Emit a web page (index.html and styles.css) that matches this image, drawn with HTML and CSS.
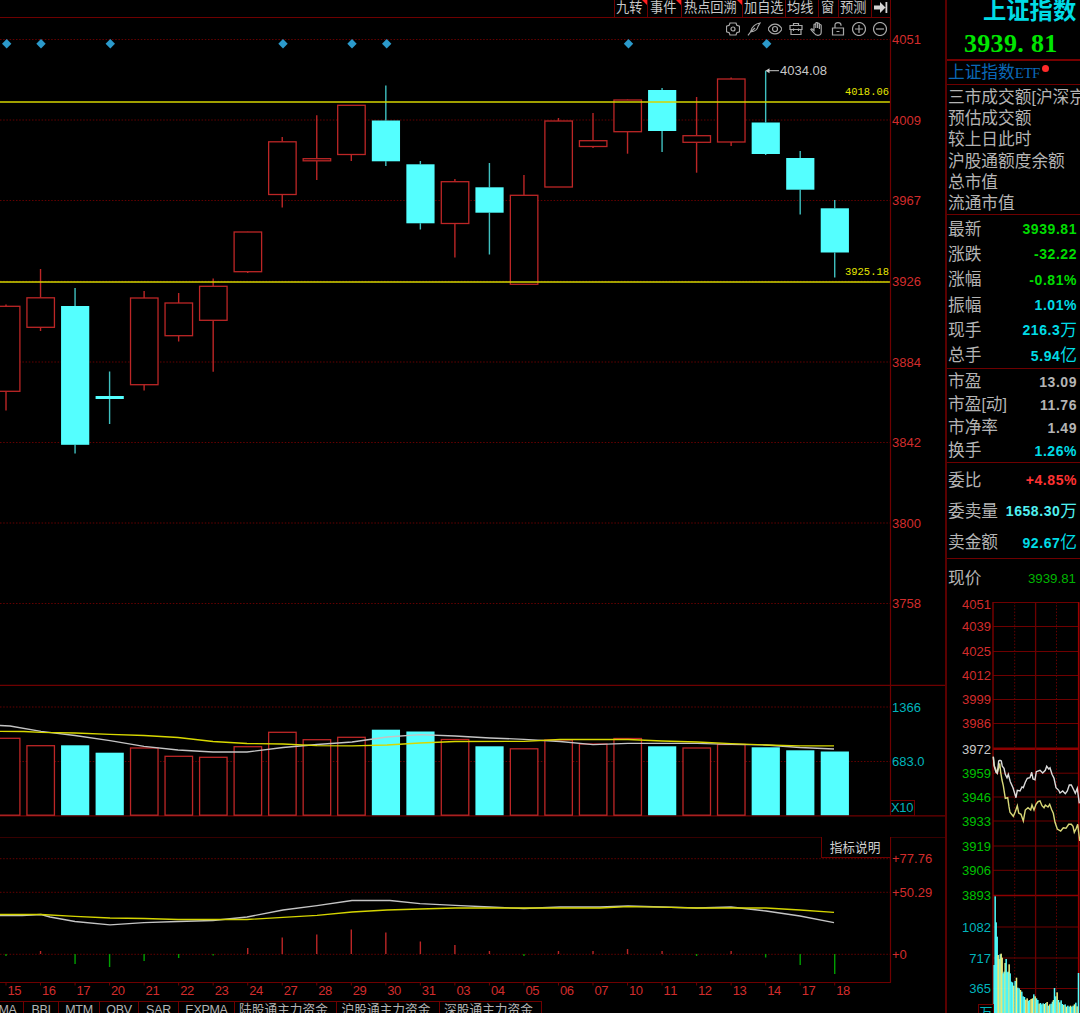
FILE: index.html
```html
<!DOCTYPE html>
<html lang="zh-CN">
<head>
    <meta charset="UTF-8">
    <meta name="viewport" content="width=device-width, initial-scale=1.0">
    <title>上证指数</title>
    <link rel="stylesheet" href="styles.css">
</head>
<body>
    <div class="terminal">
        <main class="charts">
            <nav class="toolbar">
                <span class="tool hot w33">九转</span>
                <span class="tool hot w34">事件</span>
                <span class="tool hot w61">热点回溯</span>
                <span class="tool w43">加自选</span>
                <span class="tool w33">均线</span>
                <span class="tool w20">窗</span>
                <span class="tool w33">预测</span>
                <span class="tool w19">
                    <svg width="14" height="13" viewBox="0 0 14 13"><path d="M0 4.500h6V1l5.500 5.500L6 12V8.500H0zM11.500 1h1.800v11h-1.800z" fill="#d4d4d4"/></svg>
                </span>
            </nav>

            <section class="panel">
                <svg id="price" width="945" height="668" viewBox="0 18 945 668"></svg>
                <div class="icons">
                    <svg viewBox="0 0 14 14"><path d="M4 1h6l.8 2.300 2.700 1V9.700l-2.700 1L10 13H4l-.8-2.300-2.700-1V4.300l2.700-1z"/><circle cx="7" cy="7" r="2"/></svg>
                    <svg viewBox="0 0 14 14"><path d="M13 1C9 1.500 4.500 4.500 3.500 10c4-.5 7-3 7.500-5.500zM3.500 10L1 13.300M3.500 10L8 6"/></svg>
                    <svg viewBox="0 0 14 14"><path d="M0 7c3.500-6.500 10.500-6.500 14 0-3.500 6.500-10.500 6.500-14 0z"/><circle cx="7" cy="7" r="2.500"/></svg>
                    <svg viewBox="0 0 14 14"><path d="M1 3.500h12v4H1zM2 7.500v5h10v-5M4.500 3.500v-2h5v2M4.500 6.500v2.500M9.500 6.500v2.500"/></svg>
                    <svg viewBox="0 0 14 14"><path d="M4 8.500V3q0-1 .9-1t.9 1v3V1.500q0-1 .9-1t.9 1V6 2q0-1 .9-1t.9 1v5V3.500q0-1 .9-1t.9 1V9.500Q11.500 13.300 8 13.300 5.500 13.300 4 11L.8 7.500q.8-1.300 2 0z"/></svg>
                    <svg viewBox="0 0 14 14"><path d="M1.500 6h11v7h-11zM4 6V3q0-2.300 3-2.300T10 3v.8M5.500 9.500h3"/></svg>
                    <svg viewBox="0 0 14 14"><circle cx="7" cy="7" r="6.500"/><path d="M3 7h8M7 3v8"/></svg>
                    <svg viewBox="0 0 14 14"><circle cx="7" cy="7" r="6.500"/><path d="M3 7h8"/></svg>
                </div>
            </section>

            <section class="panel volume">
                <svg id="volume" width="945" height="131" viewBox="0 686 945 131"></svg>
            </section>

            <section class="panel macd">
                <svg id="macd" width="945" height="164" viewBox="0 837 945 164"></svg>
                <button class="explain">指标说明</button>
            </section>

            <nav class="indicators">
                <span class="ind i24">MA</span>
                <span class="ind i35">BBI</span>
                <span class="ind i41">MTM</span>
                <span class="ind i39">OBV</span>
                <span class="ind i40">SAR</span>
                <span class="ind i56">EXPMA</span>
                <span class="ind cjk i102">陆股通主力资金</span>
                <span class="ind cjk i103">沪股通主力资金</span>
                <span class="ind cjk i102">深股通主力资金</span>
            </nav>
        </main>

        <aside class="quote">
            <header class="head">
                <div class="name">上证指数</div>
                <div class="last">3939<span class="dot">.</span>81</div>
            </header>
            <div class="etf">上证指数<span class="etf-en">ETF</span><i class="badge"></i></div>

            <div class="group market">
                <div class="row"><span>三市成交额<span class="br">[</span>沪深京</span></div>
                <div class="row"><span>预估成交额</span></div>
                <div class="row"><span>较上日此时</span></div>
                <div class="row"><span>沪股通额度余额</span></div>
                <div class="row"><span>总市值</span></div>
                <div class="row"><span>流通市值</span></div>
            </div>

            <div class="group basic">
                <div class="row"><span>最新</span><b class="green">3939.81</b></div>
                <div class="row"><span>涨跌</span><b class="green">-32.22</b></div>
                <div class="row"><span>涨幅</span><b class="green">-0.81%</b></div>
                <div class="row"><span>振幅</span><b class="cyan">1.01%</b></div>
                <div class="row"><span>现手</span><b class="cyan">216.3<em>万</em></b></div>
                <div class="row"><span>总手</span><b class="cyan">5.94<em>亿</em></b></div>
            </div>

            <div class="group ratio">
                <div class="row"><span>市盈</span><b>13.09</b></div>
                <div class="row"><span>市盈<span class="br">[</span>动<span class="br">]</span></span><b>11.76</b></div>
                <div class="row"><span>市净率</span><b>1.49</b></div>
                <div class="row"><span>换手</span><b class="cyan">1.26%</b></div>
            </div>

            <div class="group orders">
                <div class="row"><span>委比</span><b class="red">+4.85%</b></div>
                <div class="row"><span>委卖量</span><b class="aqua">1658.30<em>万</em></b></div>
                <div class="row"><span>卖金额</span><b class="cyan">92.67<em>亿</em></b></div>
            </div>

            <div class="row now"><span>现价</span><span class="now-value">3939.81</span></div>
            <svg id="intraday" width="133" height="414" viewBox="947 599 133 414"></svg>
        </aside>
    </div>
    <script src="charts.js"></script>
</body>
</html>
```

FILE: styles.css
```css
body {
    margin: 0;
    background-color: #000;
    color: #b4b4b4;
    font-family: "Liberation Sans", "Noto Sans CJK SC", sans-serif;
    overflow: hidden;
}
svg {
    display: block;
}
.terminal {
    display: flex;
    width: 1080px;
    height: 1013px;
    overflow: hidden;
}
.charts {
    width: 945px;
    flex: none;
    display: flex;
    flex-direction: column;
}

/* top toolbar */
.toolbar {
    display: flex;
    justify-content: flex-end;
    box-sizing: border-box;
    width: 891px;
    height: 18px;
    border-bottom: 1px solid #6e0000;
    border-right: 1px solid #6e0000;
}
.tool {
    display: flex;
    align-items: center;
    box-sizing: border-box;
    position: relative;
    height: 17px;
    padding: 0 0 2px 1px;
    border-left: 1px solid #6e0000;
    font-size: 13.2px;
    line-height: 14px;
    color: #c8c8c8;
    white-space: nowrap;
}
.hot::after {
    content: "";
    position: absolute;
    top: 0;
    right: 0;
    border-top: 5px solid #ff2020;
    border-left: 5px solid transparent;
}
.w19 { width: 19px; padding-left: 2px; }
.w20 { width: 20px; padding-left: 2px; }
.w33 { width: 33px; }
.w34 { width: 34px; padding-left: 2px; }
.w43 { width: 43px; }
.w61 { width: 61px; padding-left: 2px; }

/* chart panels */
.panel {
    position: relative;
}
.volume {
    margin-bottom: 20px;
}
.icons {
    position: absolute;
    top: 4px;
    left: 726px;
    display: flex;
    gap: 7px;
}
.icons svg {
    width: 14px;
    height: 14px;
    fill: none;
    stroke: #a8a8a8;
    stroke-width: 1.2;
}
.explain {
    position: absolute;
    top: 0;
    left: 821px;
    width: 70px;
    height: 21px;
    padding: 0 2px 0 0;
    background-color: #000;
    border: 1px solid #6e0000;
    border-top: none;
    color: #d0d0d0;
    font-family: inherit;
    font-size: 12.7px;
    line-height: 22px;
}
.indicators {
    display: flex;
    height: 12px;
}
.ind {
    box-sizing: border-box;
    height: 12px;
    border-top: 1px solid #6e0000;
    border-right: 1px solid #6e0000;
    text-align: center;
    font-size: 12.5px;
    line-height: 17px;
    letter-spacing: -0.3px;
    white-space: nowrap;
    flex: none;
}
.cjk {
    padding-right: 4px;
    font-size: 12.7px;
    letter-spacing: 0;
    line-height: 17px;
}
.i24 { width: 24px; text-indent: -8px; }
.i35 { width: 35px; }
.i39 { width: 39px; }
.i40 { width: 40px; }
.i41 { width: 41px; }
.i56 { width: 56px; }
.i102 { width: 102px; }
.i103 { width: 103px; }

/* chart text */
.axis {
    font-size: 13px;
    fill: #d22c2c;
}
.axis-cyan {
    fill: #00b4bc;
}
.axis-green {
    fill: #00c000;
}
.axis-white {
    fill: #c8c8c8;
}
.level {
    font-family: "Liberation Mono", monospace;
    font-size: 11.5px;
    fill: #e6e600;
}

/* quote panel */
.quote {
    flex: none;
    box-sizing: border-box;
    width: 135px;
    border-left: 2px solid #5a0000;
    overflow: hidden;
}
.head {
    height: 59px;
    border-bottom: 2px solid #760000;
}
.name {
    height: 30px;
    margin-left: 36px;
    color: #00dce6;
    font-size: 23.3px;
    font-weight: bold;
    line-height: 23px;
    white-space: nowrap;
}
.last {
    margin-left: 17px;
    color: #00e600;
    font-family: "Liberation Serif", serif;
    font-weight: bold;
    font-size: 26px;
    letter-spacing: 0.3px;
    line-height: 28px;
}
.dot {
    margin-right: 7px;
}
.etf {
    display: flex;
    align-items: center;
    height: 23px;
    padding-left: 1px;
    border-bottom: 1px solid #6e0000;
    color: #0a68b8;
    font-size: 16.7px;
    line-height: 20px;
}
.etf-en {
    font-family: "Liberation Serif", serif;
    font-size: 15px;
    letter-spacing: -0.5px;
}
.badge {
    width: 7px;
    height: 7px;
    margin: 0 0 8px 2px;
    border-radius: 50%;
    background-color: #ff2a2a;
}
.group {
    border-bottom: 1px solid #6e0000;
    box-sizing: border-box;
}
.row {
    display: flex;
    align-items: center;
    justify-content: space-between;
    padding: 0 3px 0 1px;
    font-size: 16.7px;
    line-height: 20px;
    white-space: nowrap;
}
.row b {
    display: flex;
    align-items: center;
    font-size: 14px;
    letter-spacing: 0.55px;
    line-height: 18px;
    padding-bottom: 1px;
}
.row em {
    font-style: normal;
    font-weight: normal;
    font-size: 16.7px;
    letter-spacing: 0;
    padding-top: 1px;
}
.br {
    font-family: "Liberation Sans", sans-serif;
    font-size: 16px;
}
.market {
    height: 130px;
    padding-top: 2px;
}
.market .row {
    height: 21.3px;
}
.basic {
    height: 154px;
    padding-top: 2px;
}
.basic .row {
    height: 25.3px;
}
.ratio {
    height: 94px;
    padding-top: 1.5px;
}
.ratio .row {
    height: 23.1px;
}
.orders {
    height: 96px;
    padding-top: 2px;
}
.orders .row {
    height: 31.3px;
}
.now {
    height: 40px;
    padding-right: 4px;
}
.now-value {
    color: #00b400;
    font-size: 13.3px;
}
.green { color: #00dc00; }
.cyan { color: #00dce6; }
.aqua { color: #50f0f0; }
.red { color: #ff3232; }
```

FILE: charts.js
```js
const LINE = '#6e0000';
const GRID = '#640000';
const RED = '#bc2626';
const CYAN = '#54ffff';
const STEP = 34.53;

const cx = i => 6 + i * STEP;
const line = (x1, y1, x2, y2, color, w = 1, extra = '') =>
    `<line x1="${x1}" y1="${y1}" x2="${x2}" y2="${y2}" stroke="${color}" stroke-width="${w}" ${extra}/>`;
const text = (x, y, s, cls = '', extra = '') =>
    `<text x="${x}" y="${y}" class="axis ${cls}" ${extra}>${s}</text>`;
const poly = (pts, color, w = 1.2) =>
    `<polyline points="${pts}" fill="none" stroke="${color}" stroke-width="${w}"/>`;
const box = (i, top, bottom, up) => up
    ? `<rect x="${cx(i) - 13.6}" y="${top}" width="27.5" height="${bottom - top}" fill="#000" stroke="${RED}" stroke-width="1.3"/>`
    : `<rect x="${cx(i) - 14}" y="${top}" width="28.2" height="${bottom - top}" fill="${CYAN}"/>`;
const dots = 'stroke-dasharray="1.5 1.7"';

// day, high, body top, body bottom, low, up, volume top, macd bar end
const days = [
    ['15', 304.5, 306.3, 391.3, 410.5, 1, 738.3, 956],
    ['16', 269, 297.8, 327.3, 331, 1, 745.7, 951],
    ['17', 288, 306, 444.8, 453.5, 0, 745.3, 964],
    ['20', 371.5, 396, 399, 424, 0, 752.7, 967],
    ['21', 291, 298, 384.7, 390.5, 1, 748, 961],
    ['22', 293, 303, 335.7, 341.5, 1, 756.3, 958],
    ['23', 278.5, 286.3, 320.3, 371.7, 1, 757.3, 955.5],
    ['24', 231.7, 232, 271.7, 273, 1, 746.7, 948],
    ['27', 137, 141.8, 194.5, 207.5, 1, 732.3, 937.5],
    ['28', 115.3, 158.7, 160.8, 180, 1, 739.7, 934.5],
    ['29', 105, 105.3, 154.5, 161, 1, 737.3, 929.5],
    ['30', 85.5, 120.5, 161.3, 166, 0, 729.7, 932.5],
    ['31', 161, 164.3, 223.3, 229.5, 0, 731.5, 941.5],
    ['03', 179, 181.7, 223.5, 257.5, 1, 739.5, 945],
    ['04', 163, 187.3, 212.7, 254.5, 0, 746.3, 951],
    ['05', 175, 195.3, 284.3, 284.3, 1, 748.8, 956],
    ['06', 118, 121, 187, 187, 1, 740, 951],
    ['07', 113, 140.7, 146.5, 148, 1, 744, 951],
    ['10', 99.5, 100, 131.7, 153.7, 1, 738.5, 949],
    ['11', 88, 90, 131, 152, 0, 746.3, 951],
    ['12', 97, 135.7, 142.3, 172.7, 1, 748, 956],
    ['13', 77.5, 79, 142, 146, 1, 744.5, 951],
    ['14', 70.7, 122.5, 154, 155, 0, 747.3, 957.5],
    ['17', 151, 158, 189.7, 214.5, 0, 750.3, 965],
    ['18', 200, 208.3, 252.5, 277.5, 0, 751.5, 974]
];

// price panel
let p = '';
[[39.5, 4051], [120, 4009], [200.5, 3967], [281.3, 3926], [362, 3884], [442.5, 3842], [523, 3800], [603.5, 3758]]
    .forEach(([y, v]) => p += line(0, y, 890, y, GRID, 1, dots) + text(892, y + 4.6, v));
days.forEach(([, high, top, bottom, low, up], i) => {
    p += line(cx(i), high, cx(i), top, up ? RED : '#40c0c0', 1.4);
    p += line(cx(i), bottom, cx(i), low, up ? RED : '#40c0c0', 1.4);
    p += box(i, top, bottom, up);
});
[6.7, 41, 110.3, 283, 352, 386.7, 628.5, 766.7].forEach(x =>
    p += `<path d="M${x} 39l4.700 4.700-4.700 4.700-4.700-4.700z" fill="#2b9acb"/>`);
p += line(0, 102, 890, 102, '#d4d400', 1.4) + line(0, 282, 890, 282, '#d4d400', 1.4);
p += text(845, 95, '4018.06', 'level', 'textLength="44" lengthAdjust="spacingAndGlyphs"');
p += text(845, 275, '3925.18', 'level', 'textLength="44" lengthAdjust="spacingAndGlyphs"');
p += line(768, 70.7, 779, 70.7, '#c8c8c8') + '<path d="M765.500 70.700l4-2.500v5z" fill="#d0d0d0"/>';
p += text(780, 74.6, '4034.08', 'axis-white');
p += line(890.5, 18, 890.5, 686, LINE, 1.2) + line(0, 685.3, 945, 685.3, LINE, 1.2);
document.getElementById('price').innerHTML = p;

// volume panel
let v = line(0, 707, 890, 707, GRID, 1, dots) + line(0, 761.5, 890, 761.5, GRID, 1, dots);
v += line(0, 815.8, 945, 815.8, LINE, 1.2);
days.forEach((d, i) => v += box(i, d[6], 815.2, d[5]));
v += poly('0,725.5 10,726 41,731.3 75,735.5 110,740.7 144,746.3 178,750 213,752 247,752 283,747.5 317,744.5 352,742 387,737 420,734.7 455,736 490,738 524,739.3 560,741.5 593,744.7 628,743.3 662,743.3 697,743.3 731,744.3 766,745 800,747.5 834,749', '#c4c4c4', 1.3);
v += poly('0,731.3 24,731.5 41,732.3 75,733 110,734.3 144,735.5 178,737.5 213,741.5 247,743.5 283,744 317,745.7 352,745.8 387,745 420,743 455,741.5 524,741.3 560,739.5 628,739.5 662,741 697,742 731,743.7 766,745 800,745.8 834,745.8', '#d8d800', 1.3);
v += line(890.5, 686, 890.5, 816, LINE, 1.2);
v += text(892, 711.5, '1366', 'axis-cyan') + text(892, 766, '683.0', 'axis-cyan');
v += `<rect x="890.5" y="800.5" width="24" height="15" fill="none" stroke="${LINE}"/>`;
v += text(891, 812.3, 'X10', 'axis-cyan', 'textLength="22.500"');
document.getElementById('volume').innerHTML = v;

// macd panel
let m = line(0, 837, 945, 837, LINE, 1.2);
m += line(890.5, 837, 890.5, 982.5, LINE, 1.2) + line(0, 982.5, 891, 982.5, LINE, 1.2);
[[858.7, '+77.76'], [892.3, '+50.29'], [954.3, '+0']].forEach(([y, s]) =>
    m += line(0, y, 890, y, GRID, 1, dots) + text(892, y + 4.7, s));
days.forEach((d, i) => {
    m += line(cx(i), 954, cx(i), d[7], d[7] < 954 ? '#bc2626' : '#00a000', 1.4);
    m += line(cx(i), 982.5, cx(i), 985.5, LINE) + text(cx(i) + 1.5, 995.3, d[0], '', 'textLength="14"');
});
m += poly('0,915.5 22,915.5 41,914.5 50,917 75,921.5 110,924.8 144,922.7 178,921.5 213,920.5 247,917 283,910 317,905.7 352,900.5 390,900.5 420,903.7 455,905.3 490,907 524,908.5 560,907 600,907 628,906 662,907 697,908 731,907 766,911 800,916 834,922.7', '#c4c4c4', 1.3);
m += poly('0,914.5 41,914.5 75,916.3 110,918 144,918.5 178,919.5 247,919.5 283,917.3 317,915.3 352,912 387,910 420,909 455,908 600,908 628,906.7 662,907.2 697,908 766,908 800,910 834,912.3', '#d4d400', 1.3);
document.getElementById('macd').innerHTML = m;

// intraday panel
let d = '';
[[602.5, 4051], [626.5, 4039], [651.5, 4025], [675.5, 4012], [699.5, 3999], [723.5, 3986], [748.8, 3972],
 [773.2, 3959], [797, 3946], [821, 3933], [846, 3919], [870.3, 3906], [895.5, 3893],
 [927, 1082], [958, 717], [988.5, 365]].forEach(([y, s], i) => {
    const cls = i > 12 ? 'axis-cyan' : i > 6 ? 'axis-green' : i === 6 ? 'axis-white' : '';
    d += line(993, y, 1079, y, i === 6 || i === 12 ? '#8c0000' : LINE, i === 6 ? 2.5 : i === 12 ? 1.6 : 1);
    d += text(991, y + (i === 0 ? 6.2 : 4.7), s, cls, 'text-anchor="end"');
});
d += line(993, 602, 993, 1013, '#7c0000', 1.4) + line(1035.6, 602, 1035.6, 1013, LINE, 1.3);
d += line(1014.7, 602, 1014.7, 1013, GRID, 1, dots) + line(1056.5, 602, 1056.5, 1013, GRID, 1, dots);
d += line(1078.7, 602, 1078.7, 1013, '#9c0000', 1.6);

// x offset, top of the bar, in thirds of a pixel from (940, 735)
const vols = [[162, 690], [165, 484], [168, 562], [171, 605], [174, 660], [177, 672], [180, 658], [183, 656], [186, 668],
    [189, 715], [192, 710], [195, 684], [198, 672], [201, 712], [204, 710], [207, 688], [210, 715], [213, 740],
    [217, 742], [221, 752], [225, 738], [229, 728], [233, 758], [237, 760], [241, 765], [245, 770], [249, 784],
    [253, 786], [257, 794], [261, 790], [265, 797], [269, 795], [273, 792], [277, 790], [281, 778], [285, 784],
    [289, 790], [293, 795], [297, 806], [301, 804], [305, 808], [309, 805], [313, 807], [317, 804], [321, 801],
    [325, 812], [329, 808], [333, 806], [337, 800], [340, 795], [343, 759], [347, 784], [351, 772], [355, 795],
    [359, 802], [363, 796], [367, 807], [371, 810], [375, 808], [379, 815], [383, 812], [387, 815], [391, 812],
    [395, 815], [399, 812], [403, 808], [407, 803], [411, 814], [415, 714]];
const yellowBars = [4, 5, 7, 8, 11, 15, 19, 21, 24, 28, 29, 32, 33, 35, 38, 42, 44, 46, 49, 52, 54, 57, 59, 62, 65, 67];
vols.forEach(([x, y], i) => {
    d += `<rect x="${940 + x / 3 - 0.6}" y="${735 + y / 3}" width="1.5" height="${278 - y / 3}" fill="${yellowBars.includes(i) ? '#f0f080' : CYAN}"/>`;
});

const scaled = pts => pts.map(([x, y]) => `${(940 + x / 3).toFixed(1)},${(735 + y / 3).toFixed(1)}`).join(' ');
d += poly(scaled([[160, 65], [162, 90], [166, 100], [172, 114], [176, 98], [179, 85], [182, 112], [186, 135], [190, 152], [196, 190],
    [203, 188], [207, 215], [210, 232], [220, 244], [226, 230], [232, 212], [236, 234], [243, 238], [250, 258], [256, 225],
    [264, 218], [272, 225], [276, 210], [282, 225], [288, 208], [294, 200], [300, 198], [306, 212], [312, 218], [316, 210],
    [324, 216], [329, 208], [335, 224], [340, 235], [345, 262], [352, 282], [362, 288], [370, 278], [378, 280], [386, 268],
    [394, 268], [399, 274], [403, 292], [409, 280], [413, 268], [419, 318]]), '#d8d878', 1.4);
d += poly(scaled([[160, 65], [163, 95], [168, 112], [172, 115], [176, 78], [180, 76], [184, 78], [187, 94], [192, 100], [196, 118],
    [201, 128], [205, 118], [211, 140], [219, 158], [228, 188], [232, 166], [240, 168], [246, 156], [250, 158], [256, 142],
    [262, 130], [270, 128], [275, 112], [279, 132], [285, 134], [289, 110], [300, 106], [308, 114], [316, 106], [320, 94],
    [326, 102], [330, 98], [336, 118], [342, 130], [348, 158], [356, 166], [360, 174], [368, 168], [376, 176], [382, 168],
    [388, 150], [394, 150], [400, 162], [406, 175], [412, 160], [418, 205]]), '#dcdcdc', 1.4);
d += `<rect x="978.5" y="1004.5" width="15" height="16" fill="#000" stroke="${LINE}"/>` + text(979.5, 1017, '万', 'axis-cyan');
document.getElementById('intraday').innerHTML = d;
```
